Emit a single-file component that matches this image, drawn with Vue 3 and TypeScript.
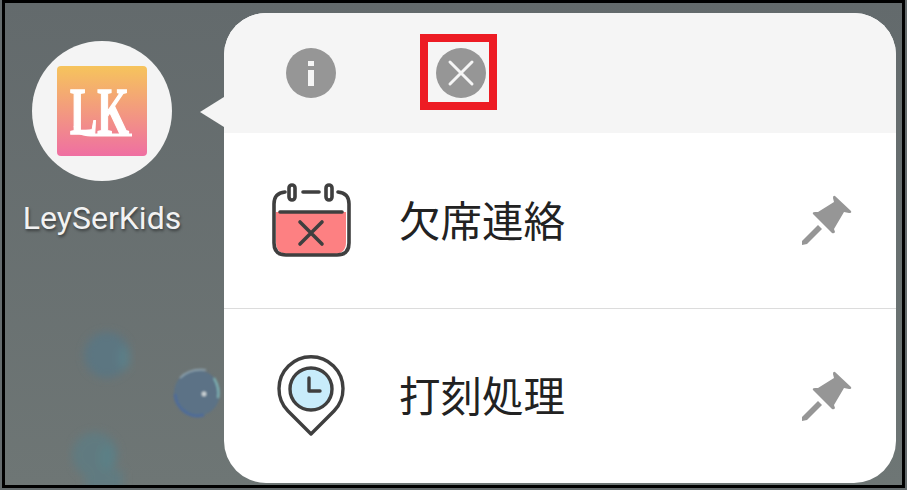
<script setup lang="ts">
const shortcuts = [
  { id: 'absence', label: '欠席連絡' },
  { id: 'stamp', label: '打刻処理' },
]
</script>

<template>
  <div class="frame">
    <!-- wallpaper bubbles -->
    <svg class="bubbles" viewBox="5 3 219 482" width="219" height="482">
      <defs>
        <filter id="soft"><feGaussianBlur stdDeviation="4" /></filter>
        <filter id="softer"><feGaussianBlur stdDeviation="1.2" /></filter>
      </defs>
      <g filter="url(#soft)">
        <circle cx="107" cy="355" r="23" fill="#5c7681" />
        <ellipse cx="124" cy="358" rx="6" ry="12" fill="#5c7f88" />
        <circle cx="95" cy="455" r="23" fill="#607a80" />
        <ellipse cx="107" cy="458" rx="7" ry="14" fill="#5c8086" />
        <rect x="85" y="470" width="38" height="20" fill="#607a80" />
      </g>
      <g filter="url(#softer)">
        <circle cx="197" cy="393" r="23" fill="#5b7286" />
        <path d="M175 394 A23 23 0 0 0 204 415" fill="none" stroke="#4f6c98" stroke-width="3" />
        <path d="M180 378 Q190 368 206 370" fill="none" stroke="#8fa4b0" stroke-width="1.6" />
        <path d="M214 378 Q220 388 218 398" fill="none" stroke="#7fb2b4" stroke-width="2.2" />
        <circle cx="204" cy="394" r="2.4" fill="#ccd3d6" />
      </g>
    </svg>

    <div class="app-col">
      <div class="app-circle">
        <svg class="logo" viewBox="0 0 90 90" width="90" height="90">
          <defs>
            <linearGradient id="logoBg" x1="0" y1="0" x2="0" y2="1">
              <stop offset="0" stop-color="#f6c45c" />
              <stop offset="1" stop-color="#ef6fa2" />
            </linearGradient>
          </defs>
          <rect width="90" height="90" rx="4" fill="url(#logoBg)" />
          <text transform="translate(13 68) scale(0.6 1)" class="logo-text">LK</text>
          <path d="M18 60 Q20 69 34 69 L75 69" fill="none" stroke="#fff" stroke-width="3" />
        </svg>
      </div>
      <div class="app-name">LeySerKids</div>
    </div>

    <div class="popup">
      <span class="arrow"></span>
      <div class="popup-head">
        <svg class="round-btn" viewBox="0 0 50 50" width="50" height="50">
          <circle cx="25" cy="25" r="25" fill="#969696" />
          <rect x="22" y="13" width="6" height="5" fill="#f5f5f5" />
          <rect x="22" y="22" width="6" height="16" fill="#f5f5f5" />
        </svg>
        <div class="red-box">
          <svg viewBox="0 0 50 50" width="50" height="50">
            <circle cx="25" cy="25" r="25" fill="#969696" />
            <path d="M14 14 L36 36 M36 14 L14 36" stroke="#f5f5f5" stroke-width="3" stroke-linecap="round" />
          </svg>
        </div>
      </div>

      <div v-for="item in shortcuts" :key="item.id" class="row">
        <svg v-if="item.id === 'absence'" class="row-icon" viewBox="0 0 110 100" width="110" height="100">
          <path d="M16 42 H86 V72 Q86 84 74 84 H28 Q16 84 16 72 Z" fill="#fd8082" />
          <g fill="none" stroke="#3f3f3f" stroke-width="3.6" stroke-linecap="round">
            <path d="M25 22 Q14 23 14 34 V73 Q14 85 26 85 H77 Q89 85 89 73 V34 Q89 23 78 22" />
            <rect x="29" y="15" width="6" height="15" rx="3" />
            <rect x="66" y="15" width="6" height="15" rx="3" />
            <path d="M43 22 H59" />
            <path d="M20 42 H82" />
            <path d="M40 52 L62 74 M62 52 L40 74" />
          </g>
        </svg>
        <svg v-else class="row-icon" viewBox="0 -4 110 100" width="110" height="100">
          <g fill="none" stroke="#3f3f3f" stroke-width="3.4" stroke-linecap="round" stroke-linejoin="round">
            <path d="M51 84 L28 61 A32 32 0 1 1 74 61 Z" />
            <circle cx="51" cy="39" r="21" fill="#c8ecfb" />
            <path d="M49 28 V41 H60" />
          </g>
        </svg>
        <span class="row-label">{{ item.label }}</span>
        <svg class="pin" viewBox="0 0 90 80" width="90" height="80">
          <path d="M55 16 L71 31 Q72 33 69 33 L64 32 L54 49 L55 52 Q54 54 52 53 L33 34 Q32 32 35 32 L38 32 L54 22 L53 18 Q53 15 55 16 Z" fill="#969696" />
          <path d="M38 45 L42 49 L27 64 L22 65 L22 61 Z" fill="#969696" />
        </svg>
      </div>
    </div>
  </div>
</template>

<style scoped>
.frame {
  position: relative;
  box-sizing: border-box;
  display: flex;
  width: 903px;
  height: 488px;
  margin-left: 2px;
  padding-top: 10px;
  border: 3px solid #000;
  background: linear-gradient(180deg, #636a6c 0%, #6e7675 100%);
  overflow: hidden;
}

.bubbles {
  position: absolute;
  left: 0;
  top: 0;
}

.app-col {
  position: relative;
  display: flex;
  flex-direction: column;
  align-items: center;
  width: 194px;
  flex-shrink: 0;
  padding-top: 28px;
}

.app-circle {
  display: flex;
  align-items: center;
  justify-content: center;
  width: 140px;
  height: 140px;
  border-radius: 50%;
  background: #f4f4f4;
}

.logo-text {
  font-family: "Liberation Serif", serif;
  font-weight: 700;
  font-size: 68px;
  fill: #fff;
  stroke: #fff;
  stroke-width: 1.5px;
}

.app-name {
  margin-top: 16px;
  font-family: Roboto, sans-serif;
  font-size: 32px;
  line-height: 42px;
  color: #f2f2f2;
  white-space: nowrap;
  text-shadow: 1px 2px 3px rgba(0, 0, 0, 0.45);
}

.popup {
  position: relative;
  display: flex;
  flex-direction: column;
  margin-left: 25px;
  width: 672px;
  height: 470px;
  border-radius: 42px;
  background: #fff;
}

.arrow {
  position: absolute;
  left: -24px;
  top: 84px;
  width: 0;
  height: 0;
  border-top: 15px solid transparent;
  border-bottom: 15px solid transparent;
  border-right: 24px solid #f5f5f5;
}

.popup-head {
  display: flex;
  align-items: center;
  height: 120px;
  padding-left: 62px;
  border-radius: 42px 42px 0 0;
  background: #f5f5f5;
}

.red-box {
  box-sizing: border-box;
  display: flex;
  align-items: center;
  width: 77px;
  height: 76px;
  margin-left: 84px;
  margin-bottom: 2px;
  padding-left: 8px;
  padding-top: 2px;
  border: 8px solid #ed1c24;
}

.row {
  display: flex;
  align-items: center;
  flex: 1;
  padding-left: 36px;
  padding-right: 26px;
}

.row + .row {
  border-top: 1px solid #dcdcdc;
}

.row-label {
  margin-left: 29px;
  margin-bottom: 3px;
  font-family: "Noto Sans CJK JP", sans-serif;
  font-size: 41.5px;
  color: #222;
}

.pin {
  margin-left: auto;
}
</style>

<style>
html,
body {
  margin: 0;
  background: #656c6e;
  overflow: hidden;
}
</style>
